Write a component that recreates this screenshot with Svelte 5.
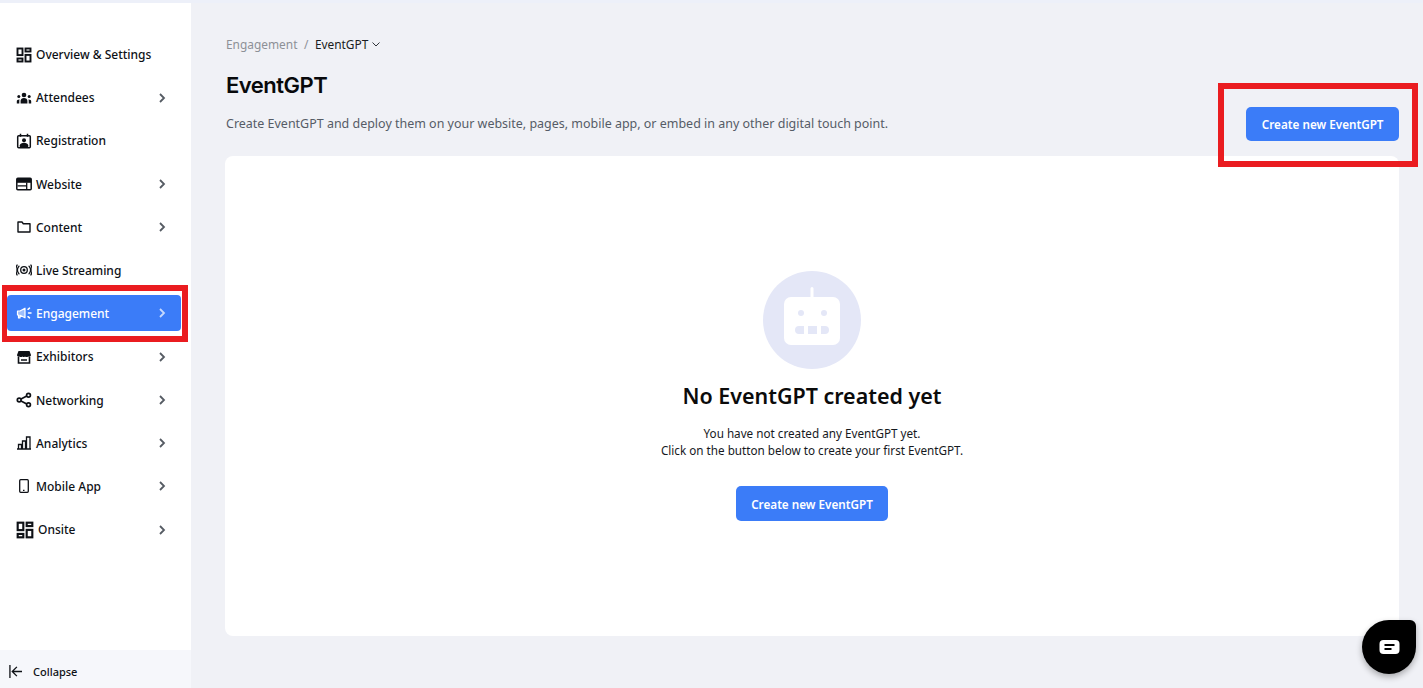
<script lang="ts">
	const navItems = [
		{ label: 'Overview & Settings', icon: 'overview', arrow: false },
		{ label: 'Attendees', icon: 'attendees', arrow: true },
		{ label: 'Registration', icon: 'registration', arrow: false },
		{ label: 'Website', icon: 'website', arrow: true },
		{ label: 'Content', icon: 'content', arrow: true },
		{ label: 'Live Streaming', icon: 'live', arrow: false },
		{ label: 'Engagement', icon: 'engagement', arrow: true, active: true },
		{ label: 'Exhibitors', icon: 'exhibitors', arrow: true },
		{ label: 'Networking', icon: 'networking', arrow: true },
		{ label: 'Analytics', icon: 'analytics', arrow: true },
		{ label: 'Mobile App', icon: 'mobile', arrow: true },
		{ label: 'Onsite', icon: 'onsite', arrow: true }
	];
</script>

{#snippet navIcon(name: string)}
	<svg class="icon" class:large={name === 'onsite'} viewBox="0 0 16 16" aria-hidden="true">
		{#if name === 'overview' || name === 'onsite'}
			<g fill="none" stroke="currentColor" stroke-width="1.9">
				<rect x="1.5" y="1.5" width="5" height="6.6" />
				<rect x="9.5" y="1.5" width="5" height="3" />
				<rect x="1.5" y="11.5" width="5" height="3" />
				<rect x="9.5" y="7.9" width="5" height="6.6" />
			</g>
		{:else if name === 'attendees'}
			<g fill="currentColor">
				<circle cx="8" cy="5" r="2.3" />
				<path d="M4.600 13.500v-2.700c0-1.700 1.400-2.800 3.400-2.800s3.400 1.100 3.400 2.800v2.700z" />
				<circle cx="2.800" cy="6.600" r="1.500" />
				<circle cx="13.200" cy="6.600" r="1.500" />
				<path d="M.8 13.500v-2.200c0-1.200.8-1.900 2.800-1.900-.2.400-.3.900-.3 1.400v2.700zM15.200 13.500v-2.200c0-1.200-.8-1.900-2.800-1.900.2.400.3.900.3 1.400v2.700z" />
			</g>
		{:else if name === 'registration'}
			<g fill="none" stroke="currentColor" stroke-width="1.500">
				<rect x="1.700" y="2.700" width="12.600" height="12" rx="1" />
				<path d="M4.500 .8v3M11.500 .8v3" />
			</g>
			<circle cx="8" cy="7.300" r="2" fill="currentColor" />
			<path d="M3.800 14v-1.700c0-1.600 2.200-2.500 4.200-2.500s4.200.9 4.200 2.500V14z" fill="currentColor" />
		{:else if name === 'website'}
			<rect x=".8" y="2.300" width="14.400" height="11.400" rx="1" fill="none" stroke="currentColor" stroke-width="1.500" />
			<path d="M1 3h14v3.800H1z" fill="currentColor" />
			<path d="M10.700 6.500v6.800M1.500 9.800h9.200" stroke="currentColor" stroke-width="1.300" fill="none" />
		{:else if name === 'content'}
			<path d="M2 3h4l1.300 1.700H14v8.300H2z" fill="none" stroke="currentColor" stroke-width="1.400" stroke-linejoin="round" />
		{:else if name === 'live'}
			<circle cx="8" cy="8" r="1.500" fill="currentColor" />
			<g fill="none" stroke="currentColor" stroke-width="1.300" stroke-linecap="round">
				<circle cx="8" cy="8" r="3.300" />
				<path d="M3 4.200c-1.900 2.200-1.900 5.400 0 7.600M13 4.200c1.900 2.200 1.900 5.400 0 7.600" />
				<path d="M1.100 3c-1.500 3-1.500 7 0 10M14.900 3c1.500 3 1.500 7 0 10" />
			</g>
		{:else if name === 'engagement'}
			<path d="M1.500 6h2.500L9 3.200v9.600L4 10.200V13H2.500v-3h-1z" fill="#9dbefb" stroke="currentColor" stroke-width="1.200" stroke-linejoin="round" />
			<path d="M12 4.300l1.500-1.200M12.500 8h2.500M12 11.700l1.500 1.200" stroke="currentColor" stroke-width="1.500" stroke-linecap="round" />
		{:else if name === 'exhibitors'}
			<path d="M2.500 2h11l1.500 4c0 1.500-1.800 2.300-2.800 1.500-.9.800-2.400.8-3.200 0-.8.800-1.800.8-2.600 0-.8.800-2.300.8-3.200 0C2.800 8.300 1 7.500 1 6z" fill="currentColor" />
			<path d="M2.500 8v6h11V8" fill="none" stroke="currentColor" stroke-width="1.600" />
			<path d="M5 11h6" stroke="currentColor" stroke-width="1.500" />
		{:else if name === 'networking'}
			<g fill="none" stroke="currentColor" stroke-width="1.700">
				<circle cx="12.500" cy="3.200" r="1.900" />
				<circle cx="3.200" cy="8" r="1.900" />
				<circle cx="12.500" cy="12.800" r="1.900" />
				<path d="M5 7.100l5.800-3M5 8.900l5.800 3" />
			</g>
		{:else if name === 'analytics'}
			<path d="M1 14h14M2.500 14V9.500h3V14M6.500 14V6h3v8M10.500 14V2h3.500v12" fill="none" stroke="currentColor" stroke-width="1.300" />
		{:else if name === 'mobile'}
			<rect x="3.700" y="1.700" width="8.600" height="12.600" rx="1" fill="none" stroke="currentColor" stroke-width="1.300" />
			<path d="M7 12.300h1.500" stroke="currentColor" stroke-width="1.200" />
		{/if}
	</svg>
{/snippet}

<div class="page">
	<aside class="sidebar">
		<nav class="nav">
			{#each navItems as item}
				<a href="#top" class="nav-item" class:active={item.active}>
					{@render navIcon(item.icon)}
					<span class="nav-label">{item.label}</span>
					{#if item.arrow}
						<svg class="chevron" viewBox="0 0 10 10" aria-hidden="true">
							<path d="M3 1l4 4-4 4" fill="none" stroke="currentColor" stroke-width="1.800" />
						</svg>
					{/if}
				</a>
			{/each}
		</nav>
		<button type="button" class="collapse">
			<svg viewBox="0 0 14 14" aria-hidden="true">
				<path d="M1 0v14M14 7H3.500M8.500 2l-5 5 5 5" fill="none" stroke="currentColor" stroke-width="1.400" />
			</svg>
			Collapse
		</button>
	</aside>

	<main class="main">
		<div class="breadcrumb">
			<span class="crumb-muted">Engagement</span>
			<span class="crumb-sep">/</span>
			<span class="crumb-current">EventGPT</span>
			<svg viewBox="0 0 10 10" aria-hidden="true">
				<path d="M1.500 3.500L5 7l3.500-3.500" fill="none" stroke="currentColor" stroke-width="1" />
			</svg>
		</div>

		<div class="header">
			<div>
				<h1>EventGPT</h1>
				<p>Create EventGPT and deploy them on your website, pages, mobile app, or embed in any other digital touch point.</p>
			</div>
			<button type="button" class="primary">Create new EventGPT</button>
		</div>

		<section class="card">
			<div class="empty-icon">
				<svg viewBox="0 0 56 58" aria-hidden="true">
					<path d="M26.500 12V1.500a1.500 1.500 0 0 1 3 0V12z" fill="#fff" />
					<rect y="10" width="56" height="48" rx="7" fill="#fff" />
					<circle cx="17" cy="26" r="3" fill="#e4e7f7" />
					<circle cx="40" cy="26" r="3" fill="#e4e7f7" />
					<path d="M15 39h5v8h-5a4 4 0 0 1 0-8zM24 39h9v8h-9zM37 39h4a4 4 0 0 1 0 8h-4z" fill="#e4e7f7" />
				</svg>
			</div>
			<h2>No EventGPT created yet</h2>
			<p class="empty-text">You have not created any EventGPT yet.<br />Click on the button below to create your first EventGPT.</p>
			<button type="button" class="primary">Create new EventGPT</button>
		</section>
	</main>

	<div class="top-strip"></div>
	<div class="mark mark-nav"></div>
	<div class="mark mark-create"></div>

	<button type="button" class="chat" aria-label="Chat">
		<svg viewBox="1 1 20 14" aria-hidden="true">
			<path d="M5 1h12a4 4 0 0 1 4 4v6a4 4 0 0 1-4 4H5a4 4 0 0 1-4-4V5a4 4 0 0 1 4-4z" fill="#fff" />
			<path d="M6 6h10M6 10h7" stroke="#000" stroke-width="2" />
		</svg>
	</button>
</div>

<style>
	:global(body) {
		margin: 0;
		overflow: hidden;
		background: #f0f1f6;
	}

	.page {
		position: relative;
		display: flex;
		height: 688px;
		font-family: 'Noto Sans', 'Open Sans', sans-serif;
		color: #0b0b0b;
		background: #f0f1f6;
	}

	.top-strip {
		position: absolute;
		inset: 0 0 auto 0;
		height: 3px;
		background: #edf0f9;
	}

	.sidebar {
		display: flex;
		flex-direction: column;
		flex: 0 0 191px;
		background: #fff;
	}

	.nav {
		flex: 1;
		display: flex;
		flex-direction: column;
		gap: 7.2px;
		padding: 36.5px 10px 0 7px;
	}

	.nav-item {
		display: flex;
		align-items: center;
		gap: 4.5px;
		height: 36px;
		padding: 0 14px 0 8.5px;
		border-radius: 4px;
		color: #0e1116;
		font-size: 12px;
		font-weight: 500;
		text-decoration: none;
	}

	.nav-item.active {
		margin: -0.3px 0 0.3px;
		background: #3b7cf8;
		color: #fff;
	}

	.icon {
		flex: none;
		width: 16px;
		height: 16px;
	}

	.icon.large {
		width: 18px;
		height: 18px;
	}

	.nav-label {
		flex: 1;
		white-space: nowrap;
	}

	.chevron {
		flex: none;
		width: 10px;
		height: 10px;
		color: #555b63;
	}

	.active .chevron {
		color: #c6d9fd;
	}

	.collapse {
		display: flex;
		align-items: center;
		gap: 11px;
		height: 38px;
		padding: 4px 0 0 9px;
		border: none;
		background: #f6f7fb;
		color: #0e1116;
		font: inherit;
		font-size: 11px;
		font-weight: 500;
	}

	.collapse svg {
		width: 13px;
		height: 13px;
	}

	.main {
		flex: 1;
		display: flex;
		flex-direction: column;
		padding: 35px 24px 52px 34px;
		min-width: 0;
	}

	.breadcrumb {
		display: flex;
		align-items: center;
		height: 17px;
		font-size: 11.9px;
		padding-left: 1px;
	}

	.crumb-muted {
		color: #8d9096;
	}

	.crumb-sep {
		margin: 0 6.5px;
		color: #8d9096;
	}

	.crumb-current {
		color: #1a1d22;
	}

	.breadcrumb svg {
		width: 10px;
		height: 10px;
		margin-left: 3px;
		color: #30343a;
	}

	.header {
		display: flex;
		align-items: flex-end;
		justify-content: space-between;
		margin: 20px 0 22px;
		padding-left: 1px;
	}

	h1 {
		margin: 0;
		font-family: Inter, 'Noto Sans', sans-serif;
		font-size: 22px;
		font-weight: 600;
		line-height: 26px;
		letter-spacing: -0.5px;
		color: #08090b;
	}

	.header p {
		margin: 16px 0 0;
		font-size: 12.48px;
		line-height: 20px;
		color: #565c66;
	}

	.primary {
		height: 34px;
		padding: 0 15px;
		border: none;
		border-radius: 5px;
		background: #3b7cf8;
		color: #fff;
		font: inherit;
		font-size: 11.7px;
		font-weight: 600;
		white-space: nowrap;
	}

	.header .primary {
		margin-bottom: -7px;
		padding: 0 15.5px;
	}

	.card {
		flex: 1;
		display: flex;
		flex-direction: column;
		align-items: center;
		padding-top: 115px;
		border-radius: 8px;
		background: #fff;
	}

	.empty-icon {
		display: flex;
		align-items: center;
		justify-content: center;
		width: 98px;
		height: 98px;
		border-radius: 50%;
		background: #e4e7f7;
	}

	.empty-icon svg {
		width: 56px;
		height: 58px;
		margin-top: -8px;
	}

	h2 {
		margin: 12px 0 0;
		font-size: 21.45px;
		font-weight: 600;
		line-height: 30px;
		color: #0b0b0b;
	}

	.empty-text {
		margin: 14px 0 0;
		font-size: 11.7px;
		line-height: 17px;
		text-align: center;
		color: #16191e;
	}

	.card .primary {
		height: 35px;
		margin-top: 27px;
	}

	.mark {
		position: absolute;
		box-sizing: border-box;
		border: 6px solid #ea1c20;
		pointer-events: none;
	}

	.mark-nav {
		left: 2px;
		top: 285px;
		width: 186px;
		height: 57px;
		border-width: 6px 6px 6px 5px;
	}

	.mark-create {
		left: 1218px;
		top: 83px;
		width: 200px;
		height: 84px;
	}

	.chat {
		position: absolute;
		left: 1362px;
		top: 620px;
		display: flex;
		align-items: center;
		justify-content: center;
		width: 54px;
		height: 54px;
		padding: 0;
		border: none;
		border-radius: 27px 6px 27px 27px;
		background: #000;
		box-shadow: 0 3px 6px rgba(0, 0, 0, 0.3);
	}

	.chat svg {
		width: 21px;
		height: 14px;
	}
</style>
